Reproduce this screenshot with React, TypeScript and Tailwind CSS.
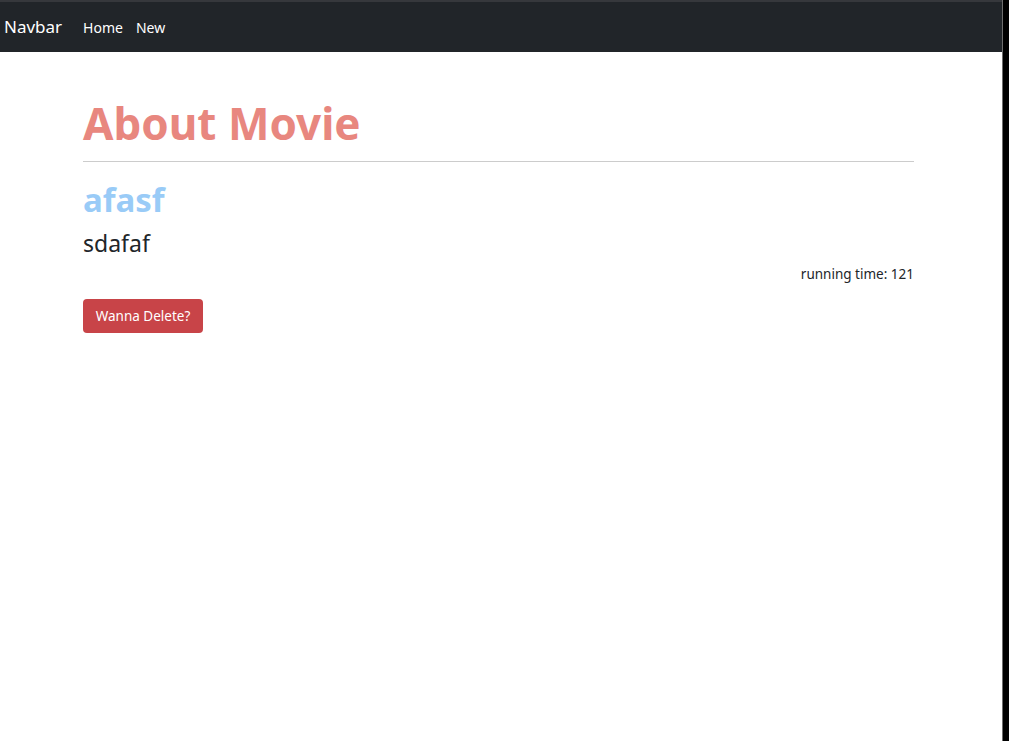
export default function App() {
  return (
    <div className="flex w-[1009px] h-[741px] bg-black" style={{ fontFamily: '"Noto Sans", "Open Sans", sans-serif' }}>
      <div className="w-[1002px] h-full bg-white flex flex-col">
        <div className="h-[52px] bg-[#212529] border-t-2 border-[#36383c] flex items-center">
          <span className="ml-[4px] text-[17px] text-white">Navbar</span>
          <span className="ml-[21px] text-[14px] text-white">Home</span>
          <span className="ml-[13px] text-[14px] text-white">New</span>
        </div>
        <div className="ml-[83px] w-[831px] flex flex-col">
          <h1 className="mt-[41px] text-[44px] leading-[60px] font-bold text-[#e8877f]">About Movie</h1>
          <div className="mt-[8px] h-px bg-[#cccccc]" />
          <h2 className="mt-[18px] text-[33px] leading-[40px] font-bold text-[#99cbf7]">afasf</h2>
          <p className="mt-[7px] text-[23px] leading-[32px] text-[#212529]">sdafaf</p>
          <p className="mt-[5px] text-right text-[13.5px] leading-[20px] text-[#212529]">running time: 121</p>
          <div className="mt-[15px]">
            <button className="h-[34px] w-[120px] rounded-[4px] bg-[#c84448] text-white text-[13.5px]">Wanna Delete?</button>
          </div>
        </div>
      </div>
      <div className="w-px h-full bg-[#6e6e6e]" />
    </div>
  );
}
